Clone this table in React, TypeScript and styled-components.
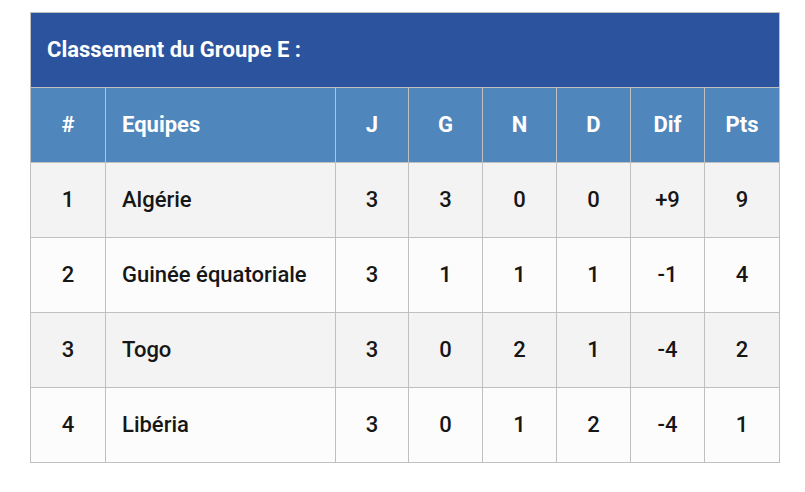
import styled, { createGlobalStyle } from 'styled-components';

const GlobalStyle = createGlobalStyle`
  html, body {
    margin: 0;
    background: #ffffff;
  }
  body {
    font-family: Roboto, "Liberation Sans", sans-serif;
  }
`;

const Page = styled.div`
  padding: 12px 0 0 30px;
`;

const Table = styled.table`
  width: 749px;
  border-collapse: collapse;
  table-layout: fixed;
  font-size: 22px;
  line-height: 1;
`;

const Caption = styled.th`
  height: 74px;
  padding: 0 16px;
  background: #2c539e;
  color: #ffffff;
  font-weight: 700;
  text-align: left;
  border: 1px solid #c0c0c0;
`;

const HeadCell = styled.th<{ $left?: boolean }>`
  height: 74px;
  padding: 0 16px;
  background: #4f86bb;
  color: #ffffff;
  font-weight: 700;
  text-align: ${(p) => (p.$left ? 'left' : 'center')};
  border: 1px solid #c0c0c0;
`;

const Row = styled.tr<{ $odd: boolean }>`
  background: ${(p) => (p.$odd ? '#f3f3f3' : '#fcfcfc')};
`;

const Cell = styled.td<{ $left?: boolean }>`
  height: 74px;
  padding: 0 16px;
  color: #161616;
  font-weight: 500;
  text-align: ${(p) => (p.$left ? 'left' : 'center')};
  border: 1px solid #c0c0c0;
`;

type Team = {
  rank: number;
  name: string;
  j: number;
  g: number;
  n: number;
  d: number;
  dif: string;
  pts: number;
};

const teams: Team[] = [
  { rank: 1, name: 'Algérie', j: 3, g: 3, n: 0, d: 0, dif: '+9', pts: 9 },
  { rank: 2, name: 'Guinée équatoriale', j: 3, g: 1, n: 1, d: 1, dif: '-1', pts: 4 },
  { rank: 3, name: 'Togo', j: 3, g: 0, n: 2, d: 1, dif: '-4', pts: 2 },
  { rank: 4, name: 'Libéria', j: 3, g: 0, n: 1, d: 2, dif: '-4', pts: 1 },
];

const widths = [75, 230, 73, 74, 74, 74, 74, 75];

const App = () => (
  <Page>
    <GlobalStyle />
    <Table>
      <colgroup>
        {widths.map((w, i) => (
          <col key={`col-${i}`} style={{ width: w }} />
        ))}
      </colgroup>
      <thead>
        <tr>
          <Caption colSpan={8}>Classement du Groupe E :</Caption>
        </tr>
        <tr>
          <HeadCell>#</HeadCell>
          <HeadCell $left>Equipes</HeadCell>
          <HeadCell>J</HeadCell>
          <HeadCell>G</HeadCell>
          <HeadCell>N</HeadCell>
          <HeadCell>D</HeadCell>
          <HeadCell>Dif</HeadCell>
          <HeadCell>Pts</HeadCell>
        </tr>
      </thead>
      <tbody>
        {teams.map((t, index) => (
          <Row key={`team-${t.rank}`} $odd={index % 2 === 0}>
            <Cell>{t.rank}</Cell>
            <Cell $left>{t.name}</Cell>
            <Cell>{t.j}</Cell>
            <Cell>{t.g}</Cell>
            <Cell>{t.n}</Cell>
            <Cell>{t.d}</Cell>
            <Cell>{t.dif}</Cell>
            <Cell>{t.pts}</Cell>
          </Row>
        ))}
      </tbody>
    </Table>
  </Page>
);

export default App;
